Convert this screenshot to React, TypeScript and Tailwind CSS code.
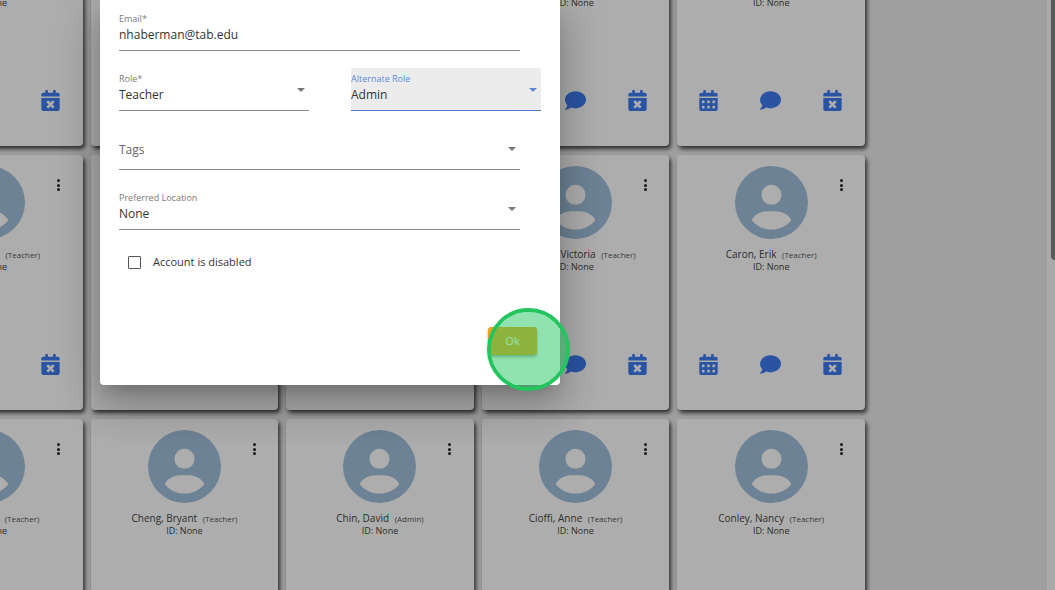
import type { ReactNode } from "react";
import { FaCalendarAlt, FaCalendarTimes, FaComment } from "react-icons/fa";

type Person = { name: string; role: string };

const people: Person[] = [
  { name: "Baker, Louise", role: "Teacher" },
  { name: "Barnes, Alice", role: "Teacher" },
  { name: "Bell, Martin", role: "Teacher" },
  { name: "Blake, Susan", role: "Teacher" },
  { name: "Brown, Peter", role: "Teacher" },
  { name: "Burke, Daniel", role: "Teacher" },
  { name: "Byrne, Laura", role: "Teacher" },
  { name: "Cohen, Mark", role: "Teacher" },
  { name: "Caraway, Victoria", role: "Teacher" },
  { name: "Caron, Erik", role: "Teacher" },
  { name: "Chase, Helen", role: "Teacher" },
  { name: "Cheng, Bryant", role: "Teacher" },
  { name: "Chin, David", role: "Admin" },
  { name: "Cioffi, Anne", role: "Teacher" },
  { name: "Conley, Nancy", role: "Teacher" },
];

function Avatar() {
  return (
    <svg viewBox="0 0 218 218" className="mx-auto size-[73px]" aria-hidden="true">
      <circle cx="109" cy="109" r="109" fill="#a1c1dc" />
      <circle cx="109" cy="86" r="30" fill="#fff" />
      <path
        d="M50 162C57 146 76 135 96 135H122C142 135 161 146 168 162C154 180 132 190 109 190C86 190 64 180 50 162Z"
        fill="#fff"
      />
    </svg>
  );
}

function PersonCard({ name, role }: Person) {
  return (
    <article className="relative h-[255px] rounded-[4px] bg-white pt-[11px] text-center text-[#444] shadow-[2px_3px_4px_rgba(0,0,0,0.7)]">
      <Avatar />
      <button
        type="button"
        aria-label={`Options for ${name}`}
        className="absolute top-6 right-5 flex h-3 w-2 flex-col items-center justify-between"
      >
        <span className="size-[3px] rounded-full bg-[#222]" />
        <span className="size-[3px] rounded-full bg-[#222]" />
        <span className="size-[3px] rounded-full bg-[#222]" />
      </button>
      <h2 className="mt-[9px] text-[10px] leading-[12px] whitespace-nowrap">
        {name} <span className="ml-[3px] text-[8px] text-[#555]">({role})</span>
      </h2>
      <p className="text-[9px] leading-[11px]">ID: None</p>
      <div className="mt-[82px] grid grid-cols-3 pr-px text-[21px] text-[#3f7df0]">
        <button type="button" aria-label="Schedule" className="flex justify-center">
          <FaCalendarAlt />
        </button>
        <button type="button" aria-label="Message" className="flex justify-center">
          <FaComment />
        </button>
        <button type="button" aria-label="Cancel schedule" className="flex justify-center">
          <FaCalendarTimes />
        </button>
      </div>
    </article>
  );
}

function Arrow({ active = false }: { active?: boolean }) {
  return (
    <svg
      viewBox="0 0 8 4"
      aria-hidden="true"
      className={`pointer-events-none absolute top-5 right-1 h-1 w-2 ${active ? "fill-[#5b8ad8]" : "fill-[#777]"}`}
    >
      <path d="M0 0H8L4 4Z" />
    </svg>
  );
}

function Field({
  id,
  label,
  active = false,
  className = "",
  children,
}: {
  id: string;
  label: string;
  active?: boolean;
  className?: string;
  children: ReactNode;
}) {
  return (
    <div
      className={`relative flex h-[43px] flex-col rounded-t-[3px] border-b pt-1 ${
        active ? "border-[#4f7ec9] bg-[#ececec]" : "border-[#8b8b8b]"
      } ${className}`}
    >
      <label
        htmlFor={id}
        className={`text-[9px] leading-[14px] ${active ? "text-[#5b8ad8]" : "text-[#7b7b7b]"}`}
      >
        {label}
      </label>
      {children}
    </div>
  );
}

const control =
  "h-[18px] w-full appearance-none bg-transparent p-0 text-[12px] leading-[18px] text-[#333] outline-none";

function EditDialog() {
  return (
    <form
      role="dialog"
      aria-label="Edit user"
      className="absolute top-0 left-[100px] w-[460px] rounded-b-[4px] bg-white pt-2 pr-10 pl-[19px] shadow-[0_11px_15px_-7px_rgba(0,0,0,0.2),0_24px_38px_3px_rgba(0,0,0,0.14),0_9px_46px_8px_rgba(0,0,0,0.12)]"
    >
      <div className="flex flex-col gap-4">
        <Field id="email" label="Email*">
          <input id="email" type="email" defaultValue="nhaberman@tab.edu" className={control} />
        </Field>
        <div className="flex gap-[42px] pt-px">
          <Field id="role" label="Role*" className="w-[190px] shrink-0">
            <select id="role" className={control}>
              <option>Teacher</option>
              <option>Admin</option>
            </select>
            <Arrow />
          </Field>
          <Field id="alternate" label="Alternate Role" active className="w-[190px] shrink-0">
            <select id="alternate" defaultValue="Admin" className={control}>
              <option>Teacher</option>
              <option>Admin</option>
            </select>
            <Arrow active />
          </Field>
        </div>
        <div className="relative h-[43px] border-b border-[#8b8b8b] pt-[14px]">
          <select
            id="tags"
            aria-label="Tags"
            className="block h-[18px] w-full appearance-none bg-transparent p-0 text-[12px] leading-[18px] text-[#666] outline-none"
          >
            <option>Tags</option>
          </select>
          <Arrow />
        </div>
        <div className="pt-px">
          <Field id="location" label="Preferred Location">
            <select id="location" className={control}>
              <option>None</option>
            </select>
            <Arrow />
          </Field>
        </div>
      </div>
      <label className="mt-6 ml-[9px] flex h-4 items-center gap-3 text-[11px] text-[#333]">
        <input
          type="checkbox"
          className="size-[13px] appearance-none rounded-[1px] border border-[#555] checked:bg-[#4f7ec9]"
        />
        Account is disabled
      </label>
      <div className="-mr-[17px] flex justify-end pt-[57px] pb-[30px]">
        <button
          type="submit"
          className="h-[28px] w-[49px] rounded-[3px] bg-[#f9a11b] text-[11px] text-white shadow-[0_2px_3px_rgba(0,0,0,0.35)]"
        >
          Ok
        </button>
      </div>
      <span
        aria-hidden="true"
        className="pointer-events-none absolute -right-[10px] -bottom-[6px] size-[83px] rounded-full border-4 border-[#22c55e] bg-[#22c55e]/50 bg-clip-padding"
      />
    </form>
  );
}

export default function App() {
  return (
    <div className="relative flex h-screen overflow-hidden bg-[#ebebeb] font-['Open_Sans','Noto_Sans',sans-serif]">
      <main className="min-w-0 flex-1">
        <div className="-mt-[109px] mr-[182px] -ml-[105px] grid grid-cols-5 gap-x-2 gap-y-[9px]">
          {people.map((person) => (
            <PersonCard key={person.name} {...person} />
          ))}
        </div>
      </main>
      <div className="flex w-2 justify-end bg-[#f9f9f9]" aria-hidden="true">
        <div className="h-[260px] w-1 rounded-bl-[4px] bg-[#878787]" />
      </div>
      <div className="absolute inset-0 bg-black/32" aria-hidden="true" />
      <EditDialog />
    </div>
  );
}
